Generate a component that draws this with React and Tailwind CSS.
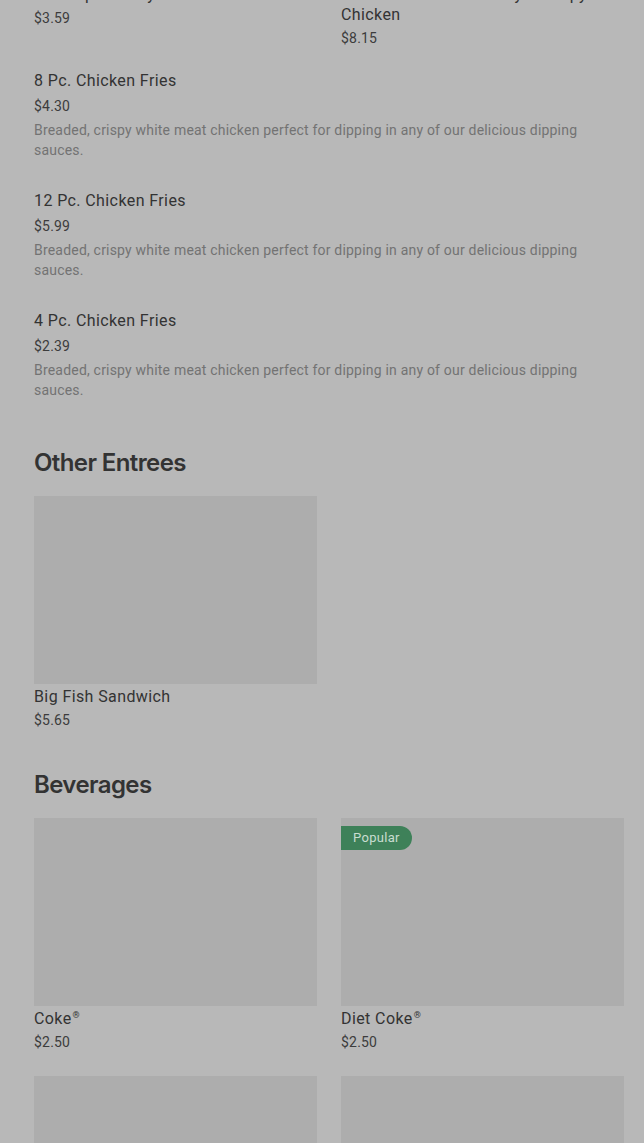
import React from 'react';

const topRow = [
  { name: 'Lil Wrap - Honey Mustard', price: '$3.59' },
  { name: 'Bacon and Swiss Lil Royal Crispy Chicken', price: '$8.15' },
];

const fries = [
  { name: '8 Pc. Chicken Fries', price: '$4.30' },
  { name: '12 Pc. Chicken Fries', price: '$5.99' },
  { name: '4 Pc. Chicken Fries', price: '$2.39' },
];

const friesDesc = 'Breaded, crispy white meat chicken perfect for dipping in any of our delicious dipping sauces.';

const beverages = [
  { name: 'Coke', price: '$2.50' },
  { name: 'Diet Coke', price: '$2.50', popular: true },
  { name: 'Sprite', price: '$2.50' },
  { name: 'Dr Pepper', price: '$2.50' },
];

function SectionTitle({ children }) {
  return (
    <h2 className="text-2xl leading-8 font-semibold tracking-tight text-[#333] font-['Inter',sans-serif]">
      {children}
    </h2>
  );
}

function ImageCard({ item, reg }) {
  return (
    <div>
      <div className="relative h-[188px] bg-[#adadad]">
        {item.popular && (
          <span className="absolute top-2 left-0 h-6 px-3 flex items-center rounded-r-full bg-[#3e8159] text-[13px] tracking-[0.3px] text-[#c9ddd0]">
            Popular
          </span>
        )}
      </div>
      <h3 className="mt-[3px] text-base leading-5 tracking-[0.4px] text-[#333]">
        {item.name}
        {reg && <sup className="text-[9px] ml-[1px] -top-[6px]">®</sup>}
      </h3>
      <p className="mt-[3px] text-sm leading-5 tracking-[0.2px] text-[#3c3c3c]">{item.price}</p>
    </div>
  );
}

export default function App() {
  return (
    <div className="h-[1143px] overflow-hidden bg-[#b8b8b8] font-['Roboto',sans-serif]">
      <div className="pl-[34px] pr-5 -mt-[15px]">
        {/* scrolled-past row */}
        <div className="grid grid-cols-2 gap-x-6">
          {topRow.map(item => (
            <div key={item.name}>
              <h3 className="text-base leading-5 tracking-[0.4px] text-[#333] pr-6">{item.name}</h3>
              <p className="mt-[3px] text-sm leading-5 tracking-[0.2px] text-[#3c3c3c]">{item.price}</p>
            </div>
          ))}
        </div>

        {/* list items */}
        <div className="mt-[23px] flex flex-col gap-[31px]">
          {fries.map(item => (
            <div key={item.name}>
              <h3 className="text-base leading-5 tracking-[0.4px] text-[#333]">{item.name}</h3>
              <p className="mt-[5px] text-sm leading-5 tracking-[0.2px] text-[#3c3c3c]">{item.price}</p>
              <p className="mt-1 text-sm leading-5 tracking-[0.2px] text-[#737373] pr-10">{friesDesc}</p>
            </div>
          ))}
        </div>

        {/* Other Entrees */}
        <div className="mt-[47px]">
          <SectionTitle>Other Entrees</SectionTitle>
          <div className="mt-[17px] grid grid-cols-2 gap-x-6">
            <ImageCard item={{ name: 'Big Fish Sandwich', price: '$5.65' }} />
          </div>
        </div>

        {/* Beverages */}
        <div className="mt-[39px]">
          <SectionTitle>Beverages</SectionTitle>
          <div className="mt-[17px] grid grid-cols-2 gap-x-6 gap-y-6">
            {beverages.map(item => (
              <ImageCard key={item.name} item={item} reg />
            ))}
          </div>
        </div>
      </div>
    </div>
  );
}
